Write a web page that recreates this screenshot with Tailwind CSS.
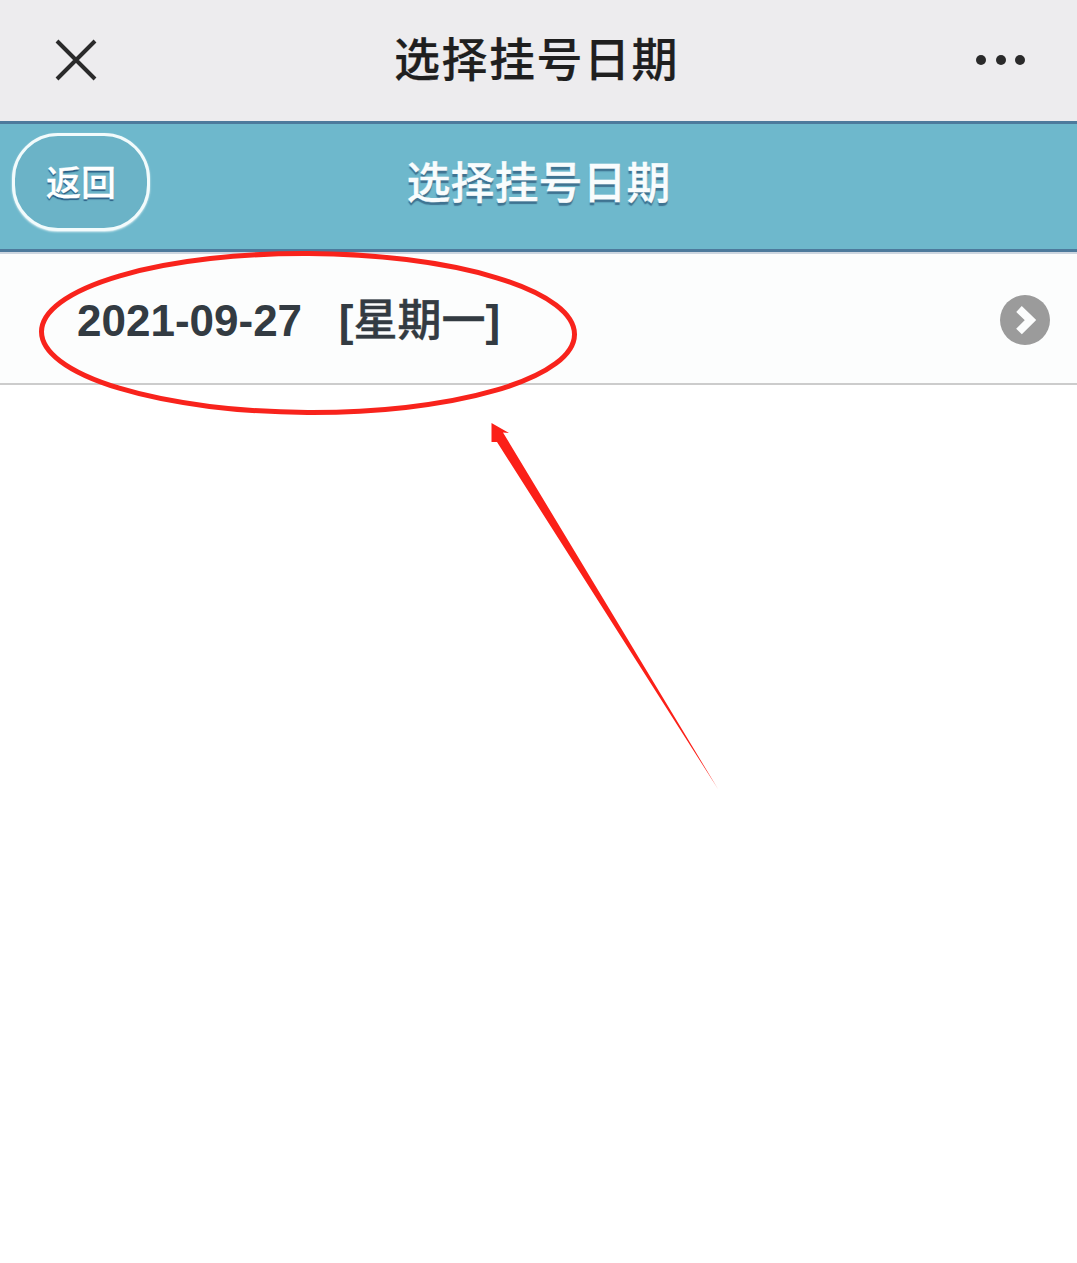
<!DOCTYPE html>
<html lang="zh">
<head>
<meta charset="utf-8">
<script src="https://cdn.jsdelivr.net/npm/@tailwindcss/browser@4"></script>
<title>选择挂号日期</title>
</head>
<body class="bg-white">
<div class="relative w-[1077px] h-[1263px] overflow-hidden bg-white font-['Liberation_Sans','Noto_Sans_CJK_SC',sans-serif]">
  <header class="grid grid-cols-[1fr_auto_1fr] items-center h-[121px] pb-[2px] bg-[#edecee]">
    <div class="pl-[54px]">
      <svg width="44" height="44" viewBox="0 0 44 44" class="block"><path d="M3 3 L41 41 M41 3 L3 41" stroke="#2a2a2a" stroke-width="4" fill="none"/></svg>
    </div>
    <h1 class="text-[46px] leading-none font-medium tracking-[1.5px] pr-[4px] text-[#1f1f1f] [-webkit-text-stroke:0.2px_#1f1f1f]">选择挂号日期</h1>
    <div class="flex justify-end gap-[9.5px] pr-[52px]">
      <span class="w-[10px] h-[10px] rounded-full bg-[#2a2a2a]"></span>
      <span class="w-[10px] h-[10px] rounded-full bg-[#2a2a2a]"></span>
      <span class="w-[10px] h-[10px] rounded-full bg-[#2a2a2a]"></span>
    </div>
  </header>
  <div class="grid grid-cols-[1fr_auto_1fr] items-center h-[131px] pb-[6px] bg-[#6eb8cc] border-y-[3px] border-[#4d7a9c] shadow-[0_2px_0_#cdd6e0]">
    <div class="pl-[12px] pb-[4px]">
      <div class="flex items-center justify-center w-[138px] h-[98px] pt-[3px] rounded-[46px] border-[3px] border-[#f2fbfc] bg-[#6bb3c7] shadow-[0_1px_2px_#dff1f5] text-[35px] leading-none font-medium text-white [-webkit-text-stroke:0.3px_#ffffff] [text-shadow:0_2px_1px_#2b5f86]">返回</div>
    </div>
    <h2 class="text-[44px] leading-none font-medium text-[#f8fcfd] [-webkit-text-stroke:0.3px_#f8fcfd] [text-shadow:0_3px_1px_#3f7391]">选择挂号日期</h2>
    <div></div>
  </div>
  <a class="mt-[2px] flex items-center justify-between h-[131px] pl-[77px] pr-[26px] pt-[3px] bg-[#fcfdfd] border-b-[2px] border-[#cccccc] text-[44px] leading-none font-bold text-[#333b42]">
    <span class="whitespace-pre pt-[2px]">2021-09-27   [<span class="font-medium [-webkit-text-stroke:0.4px_#333b42]">星期一</span>]</span>
    <svg width="52" height="52" viewBox="0 0 52 52" class="block"><circle cx="26" cy="26" r="25" fill="#9b9b9b"/><path d="M20 15 L31.5 26 L20 37.5" stroke="#fcfdfd" stroke-width="8" fill="none"/></svg>
  </a>
  <svg class="absolute left-0 top-0" width="1077" height="1263" viewBox="0 0 1077 1263" fill="none">
    <ellipse cx="308" cy="333" rx="266.5" ry="79.5" stroke="#f8231c" stroke-width="5" transform="rotate(0.3 308 333)"/>
    <polygon points="491.5,423 509,433 503,432.5 718,789 497,442 491.5,442" fill="#fb2018"/>
  </svg>
</div>
</body>
</html>
